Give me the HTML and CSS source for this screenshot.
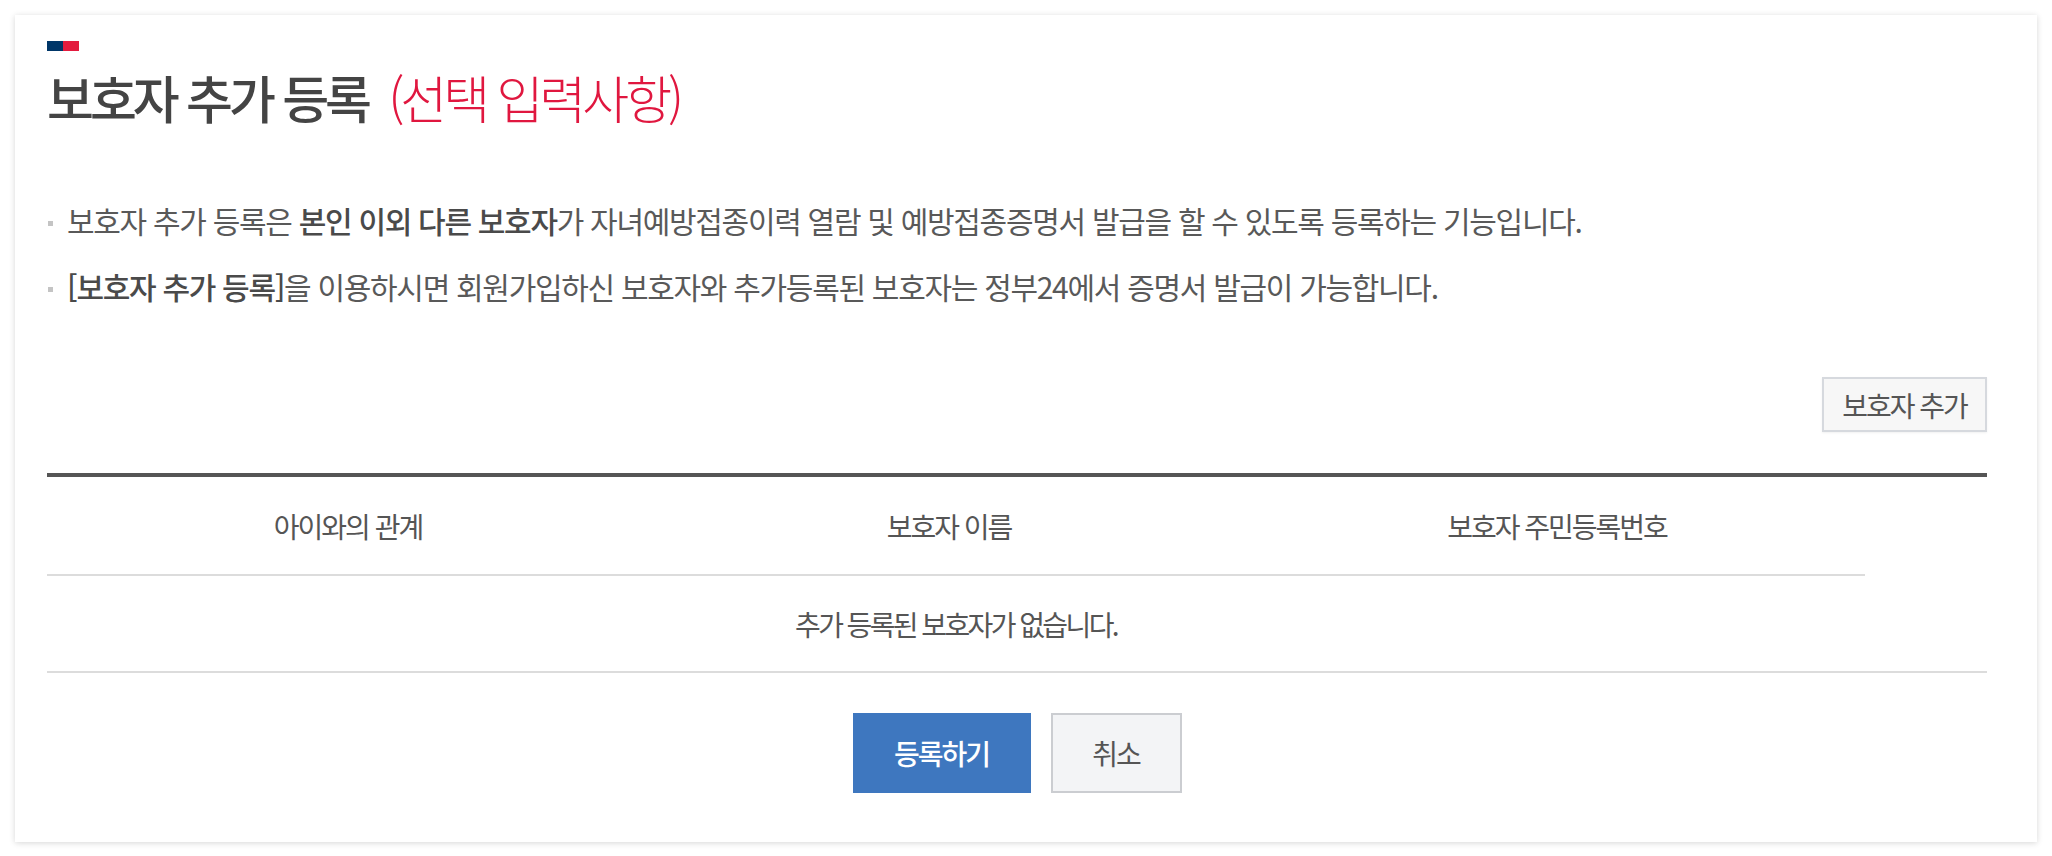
FILE: index.html
```html
<!DOCTYPE html>
<html lang="ko">
<head>
<meta charset="utf-8">
<title>보호자 추가 등록</title>
<link rel="stylesheet" href="styles.css">
</head>
<body>
<div class="card">
  <div class="flag"><span class="flag-navy"></span><span class="flag-red"></span></div>
  <h2 class="title">보호자 추가 등록 <span class="title-sub">(선택 입력사항)</span></h2>
  <ul class="notes">
    <li>보호자 추가 등록은 <strong>본인 이외 다른 보호자</strong>가 자녀예방접종이력 열람 및 예방접종증명서 발급을 할 수 있도록 등록하는 기능입니다.</li>
    <li><strong>[보호자 추가 등록]</strong>을 이용하시면 회원가입하신 보호자와 추가등록된 보호자는 정부24에서 증명서 발급이 가능합니다.</li>
  </ul>
  <div class="toolbar">
    <button class="btn-add" type="button">보호자 추가</button>
  </div>
  <div class="table-wrap">
    <table class="grid">
      <colgroup>
        <col class="col-rel">
        <col class="col-name">
        <col class="col-id">
      </colgroup>
      <thead>
        <tr>
          <th>아이와의 관계</th>
          <th>보호자 이름</th>
          <th>보호자 주민등록번호</th>
        </tr>
      </thead>
      <tbody>
        <tr>
          <td colspan="3">추가 등록된 보호자가 없습니다.</td>
        </tr>
      </tbody>
    </table>
  </div>
  <div class="actions">
    <button class="btn-primary" type="button">등록하기</button>
    <button class="btn-cancel" type="button">취소</button>
  </div>
</div>
</body>
</html>
```

FILE: styles.css
```css
* {
  box-sizing: border-box;
}

html, body {
  background: #ffffff;
}

body {
  margin: 0;
  padding: 15px;
  font-family: "Noto Sans CJK KR", "Noto Sans", sans-serif;
  color: #555555;
}

.card {
  background: #ffffff;
  box-shadow: 0 1px 6px rgba(0, 0, 0, 0.16);
  padding: 26px 50px 49px 32px;
}

.flag {
  display: flex;
  width: 32px;
  height: 10px;
}

.flag-navy {
  flex: 1;
  background: #003668;
}

.flag-red {
  flex: 1;
  background: #e31b3e;
}

.title {
  margin: 17px 0 0 0;
  height: 58px;
  font-size: 51px;
  line-height: 58px;
  font-weight: 500;
  letter-spacing: -4px;
  color: #444444;
  white-space: nowrap;
}

.title-sub {
  font-weight: 300;
  color: #e0173f;
  margin-left: 10px;
}

.notes {
  list-style: none;
  margin: 61px 0 0 0;
  padding: 0;
}

.notes li {
  position: relative;
  padding-left: 20px;
  height: 66px;
  font-size: 30px;
  line-height: 66px;
  letter-spacing: -1.3px;
  color: #595959;
  white-space: nowrap;
}

.notes li::before {
  content: "";
  position: absolute;
  left: 1px;
  top: 34px;
  width: 5px;
  height: 5px;
  background: #c4c4c4;
}

.notes strong {
  font-weight: 500;
  color: #4a4a4a;
}

.toolbar {
  display: flex;
  justify-content: flex-end;
  margin-top: 58px;
}

button {
  font-family: "Noto Sans CJK KR", "Noto Sans", sans-serif;
  font-size: 28px;
  letter-spacing: -2px;
  cursor: pointer;
  padding: 0;
}

.btn-add {
  width: 165px;
  height: 55px;
  background: #f7f7f7;
  border: 2px solid #d6d9de;
  color: #555555;
  box-shadow: 0 1px 2px rgba(0, 0, 0, 0.06);
}

.table-wrap {
  margin-top: 41px;
  border-top: 4px solid #555555;
  border-bottom: 2px solid #dcdcdc;
}

.grid {
  width: 1818px;
  border-collapse: collapse;
  table-layout: fixed;
}

.col-rel {
  width: 602px;
}

.col-name {
  width: 600px;
}

.col-id {
  width: 616px;
}

.grid th {
  height: 98px;
  font-size: 28px;
  font-weight: 400;
  letter-spacing: -2px;
  color: #555555;
  text-align: center;
  vertical-align: middle;
  border-bottom: 2px solid #dcdcdc;
  padding: 0;
}

.grid td {
  height: 96px;
  font-size: 28px;
  letter-spacing: -2.6px;
  color: #555555;
  text-align: center;
  vertical-align: middle;
  padding: 0;
}

.actions {
  display: flex;
  justify-content: center;
  gap: 20px;
  margin-top: 40px;
}

.btn-primary {
  width: 178px;
  height: 80px;
  background: #3e77bf;
  border: none;
  color: #ffffff;
  font-weight: 500;
}

.btn-cancel {
  width: 131px;
  height: 80px;
  background: #f3f4f6;
  border: 2px solid #cbcdd1;
  color: #555555;
}
```
